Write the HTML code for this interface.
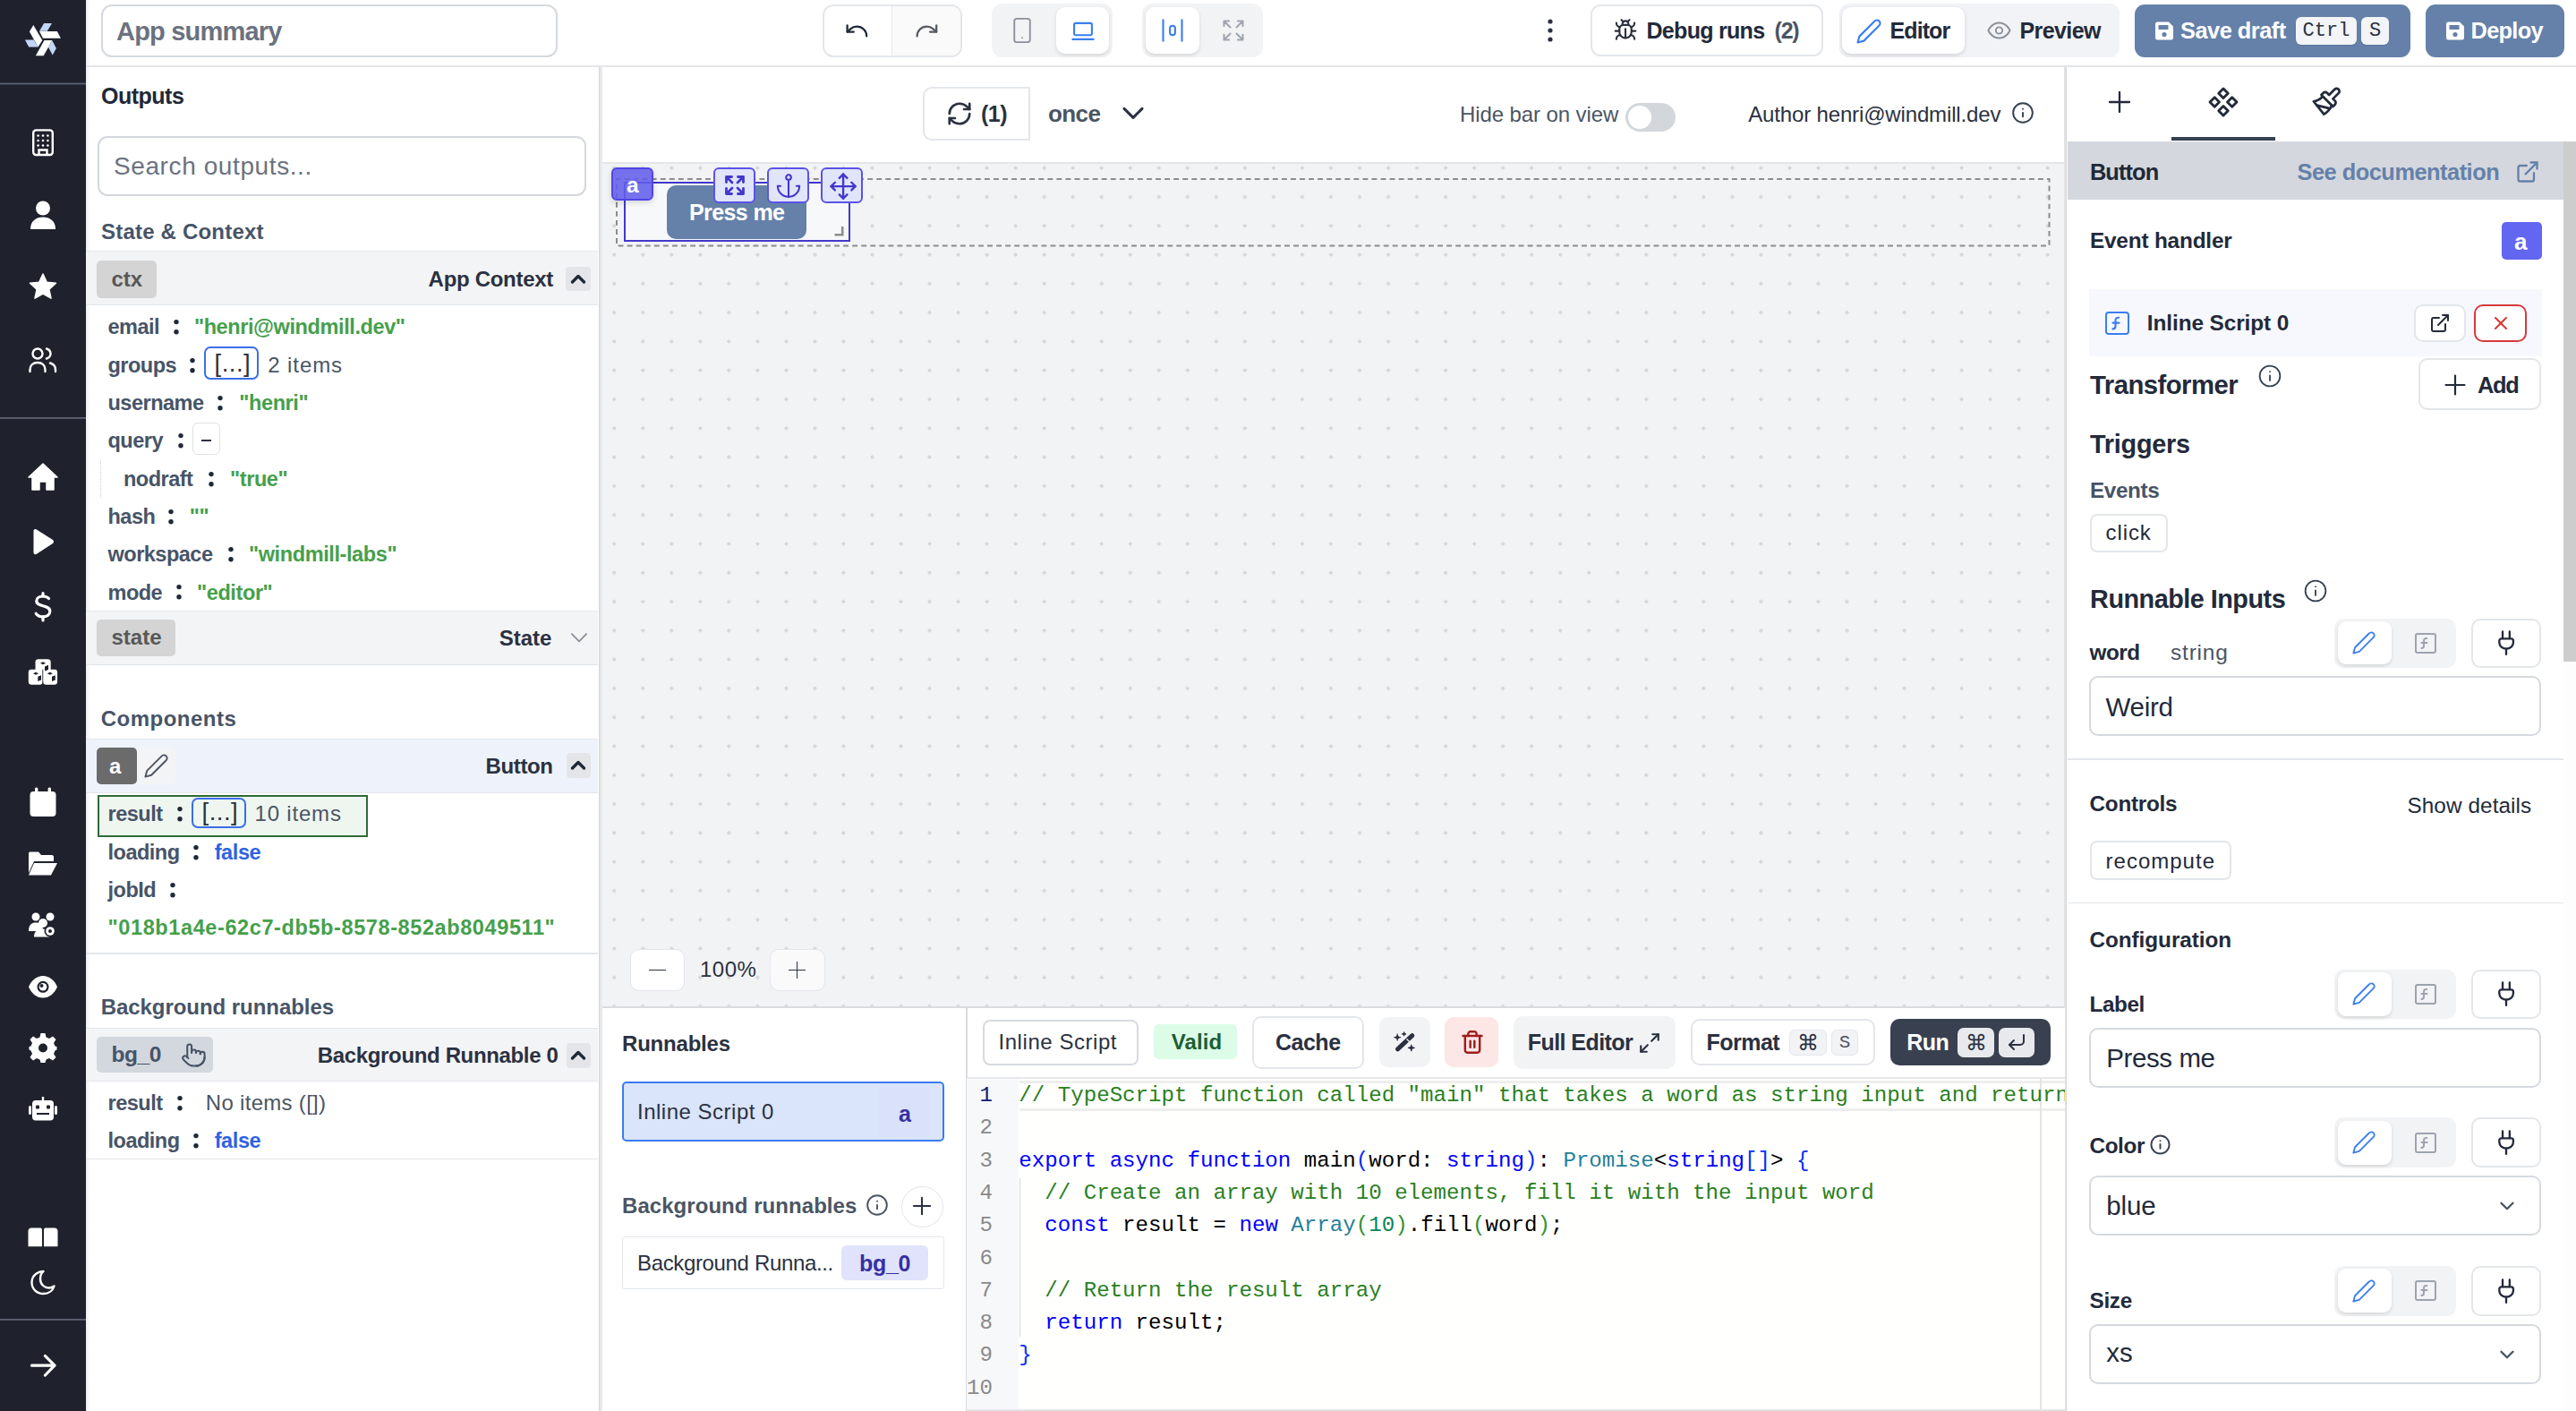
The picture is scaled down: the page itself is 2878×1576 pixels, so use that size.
<!DOCTYPE html>
<html><head><meta charset="utf-8">
<style>
*{box-sizing:border-box;margin:0;padding:0}
html,body{width:2878px;height:1576px;overflow:hidden;background:#fff}
body{position:relative;font-family:"Liberation Sans",sans-serif;color:#2b3140}
.a{position:absolute}
.t{position:absolute;white-space:nowrap;height:40px;line-height:40px}
.b{font-weight:bold}
svg{display:block;overflow:visible}
.ic{fill:none;stroke:currentColor;stroke-linecap:round;stroke-linejoin:round}
.mono{font-family:"Liberation Mono",monospace}
</style></head><body>

<div class="a" style="left:0.0px;top:0.0px;width:96.0px;height:1576.0px;background:#1f222d"></div>
<div class="a" style="left:96.0px;top:0.0px;width:2782.0px;height:74.0px;background:#fff"></div>
<div class="a" style="left:96.0px;top:72.6px;width:2782.0px;height:2.0px;background:#e3e5e9"></div>
<div class="a" style="left:96.0px;top:74.6px;width:572.3px;height:1501.4px;background:#fff"></div>
<div class="a" style="left:96.0px;top:74.6px;width:5.0px;height:1501.4px;background:linear-gradient(90deg,#eceef1,#fff)"></div>
<div class="a" style="left:96.0px;top:0.0px;width:5.0px;height:72.6px;background:linear-gradient(90deg,#eceef1,#fff)"></div>
<div class="a" style="left:668.8px;top:74.6px;width:1.6px;height:1501.4px;background:#d5d6d8"></div>
<div class="a" style="left:670.2px;top:74.6px;width:1636.8px;height:106.4px;background:#fff"></div>
<div class="a" style="left:670.2px;top:181.0px;width:1636.8px;height:943.0px;background-color:#f2f3f5"></div>
<svg class="a" style="left:670.2px;top:181px" width="1637" height="943"><defs><pattern id="dots" x="0.2" y="-9.49" width="32.03" height="32.29" patternUnits="userSpaceOnUse"><path d="M16 13.6 L18.55 16.15 L16 18.7 L13.45 16.15 Z" fill="#d5d6d8"/></pattern></defs><rect width="1637" height="943" fill="url(#dots)"/></svg>
<div class="a" style="left:670.2px;top:180.8px;width:1636.8px;height:1.8px;background:#e3e5e9"></div>
<div class="a" style="left:670.2px;top:1123.6px;width:1636.8px;height:2.0px;background:#dadbde"></div>
<div class="a" style="left:2305.7px;top:74.6px;width:2.2px;height:1501.4px;background:#e1e3e7"></div>
<div class="a" style="left:2307.9px;top:74.6px;width:1.6px;height:1501.4px;background:#d5d6d8"></div>
<div class="a" style="left:2309.5px;top:74.6px;width:568.5px;height:1501.4px;background:#fff"></div>
<div class="t " style="left:113.0px;top:86.6px;font-size:25px;letter-spacing:-0.5px;color:#1f2937;font-weight:bold;">Outputs</div>
<div class="a" style="left:108.7px;top:151.9px;width:546.8px;height:67.2px;border:2px solid #d3d7dd;border-radius:11px;background:#fff"></div>
<div class="t " style="left:127.0px;top:166.0px;font-size:28px;letter-spacing:0.6px;color:#6b7280;">Search outputs...</div>
<div class="t " style="left:113.0px;top:238.7px;font-size:24px;letter-spacing:0.2px;color:#475467;font-weight:bold;">State & Context</div>
<div class="a" style="left:96.0px;top:280.4px;width:572.0px;height:61.1px;background:#f3f4f6;border-top:1.5px solid #e3e6ea;border-bottom:1.5px solid #e3e6ea"></div>
<div class="a" style="left:108.1px;top:290.7px;width:66.7px;height:41.9px;background:#d4d4d4;border-radius:5px"></div>
<div class="t " style="left:124.5px;top:291.5px;font-size:24px;letter-spacing:0px;color:#585858;font-weight:bold;">ctx</div>
<div class="t " style="left:478.6px;top:292.2px;font-size:24px;letter-spacing:-0.3px;color:#2b3140;font-weight:bold;">App Context</div>
<div class="a" style="left:632.3px;top:298.3px;width:27.7px;height:27.2px;background:#e3e5e9;border-radius:4px"></div>
<svg class="a ic" style="left:634.1px;top:299.9px;color:#1f2937" width="24" height="24" viewBox="0 0 24 24" stroke-width="3.4"><path d="m18.5 15-6.5-6.5-6.5 6.5"/></svg>
<div class="t " style="left:120.5px;top:345.3px;font-size:23.5px;letter-spacing:-0.5px;color:#475467;font-weight:bold;">email</div>
<svg class="a" style="left:193.2px;top:355.0px" width="8" height="22"><circle cx="4" cy="4.6" r="2.7" fill="#1f2937"/><circle cx="4" cy="15.7" r="2.7" fill="#1f2937"/></svg>
<div class="t " style="left:216.9px;top:345.3px;font-size:23.5px;letter-spacing:-0.4px;color:#45a04b;font-weight:bold;">"henri@windmill.dev"</div>
<div class="t " style="left:120.5px;top:388.0px;font-size:23.5px;letter-spacing:-0.5px;color:#475467;font-weight:bold;">groups</div>
<svg class="a" style="left:210.9px;top:397.7px" width="8" height="22"><circle cx="4" cy="4.6" r="2.7" fill="#1f2937"/><circle cx="4" cy="15.7" r="2.7" fill="#1f2937"/></svg>
<div class="a" style="left:227.7px;top:387.0px;width:61.8px;height:36.9px;border:2px solid #3a6ee8;border-radius:7px"></div>
<div class="t " style="left:239.5px;top:385.5px;font-size:27.5px;letter-spacing:0.5px;color:#2b3140;">[...]</div>
<div class="t " style="left:299.3px;top:388.0px;font-size:24px;letter-spacing:0.9px;color:#4b5563;">2 items</div>
<div class="t " style="left:120.5px;top:430.3px;font-size:23.5px;letter-spacing:-0.5px;color:#475467;font-weight:bold;">username</div>
<svg class="a" style="left:242.3px;top:440.0px" width="8" height="22"><circle cx="4" cy="4.6" r="2.7" fill="#1f2937"/><circle cx="4" cy="15.7" r="2.7" fill="#1f2937"/></svg>
<div class="t " style="left:267.3px;top:430.3px;font-size:23.5px;letter-spacing:-0.4px;color:#45a04b;font-weight:bold;">"henri"</div>
<div class="t " style="left:120.5px;top:472.3px;font-size:23.5px;letter-spacing:-0.5px;color:#475467;font-weight:bold;">query</div>
<svg class="a" style="left:197.8px;top:482.0px" width="8" height="22"><circle cx="4" cy="4.6" r="2.7" fill="#1f2937"/><circle cx="4" cy="15.7" r="2.7" fill="#1f2937"/></svg>
<div class="a" style="left:214.9px;top:471.7px;width:31.4px;height:36.6px;border:1.5px solid #dfe2e6;border-radius:6px;background:#fff"></div>
<div class="a" style="left:225.0px;top:490.5px;width:11.0px;height:2.0px;background:#2b3140"></div>
<div class="a" style="left:112px;top:513px;width:0;height:42.5px;border-left:1.5px dotted #c9ccd1"></div>
<div class="t " style="left:138.0px;top:515.0px;font-size:23.5px;letter-spacing:-0.5px;color:#475467;font-weight:bold;">nodraft</div>
<svg class="a" style="left:232.2px;top:524.7px" width="8" height="22"><circle cx="4" cy="4.6" r="2.7" fill="#1f2937"/><circle cx="4" cy="15.7" r="2.7" fill="#1f2937"/></svg>
<div class="t " style="left:257.0px;top:515.0px;font-size:23.5px;letter-spacing:-0.4px;color:#45a04b;font-weight:bold;">"true"</div>
<div class="t " style="left:120.5px;top:557.3px;font-size:23.5px;letter-spacing:-0.5px;color:#475467;font-weight:bold;">hash</div>
<svg class="a" style="left:187.4px;top:567.0px" width="8" height="22"><circle cx="4" cy="4.6" r="2.7" fill="#1f2937"/><circle cx="4" cy="15.7" r="2.7" fill="#1f2937"/></svg>
<div class="t " style="left:211.8px;top:557.3px;font-size:23.5px;letter-spacing:-0.4px;color:#45a04b;font-weight:bold;">""</div>
<div class="t " style="left:120.5px;top:599.3px;font-size:23.5px;letter-spacing:-0.5px;color:#475467;font-weight:bold;">workspace</div>
<svg class="a" style="left:253.5px;top:609.0px" width="8" height="22"><circle cx="4" cy="4.6" r="2.7" fill="#1f2937"/><circle cx="4" cy="15.7" r="2.7" fill="#1f2937"/></svg>
<div class="t " style="left:278.0px;top:599.3px;font-size:23.5px;letter-spacing:-0.4px;color:#45a04b;font-weight:bold;">"windmill-labs"</div>
<div class="t " style="left:120.5px;top:641.7px;font-size:23.5px;letter-spacing:-0.5px;color:#475467;font-weight:bold;">mode</div>
<svg class="a" style="left:195.6px;top:651.4px" width="8" height="22"><circle cx="4" cy="4.6" r="2.7" fill="#1f2937"/><circle cx="4" cy="15.7" r="2.7" fill="#1f2937"/></svg>
<div class="t " style="left:220.0px;top:641.7px;font-size:23.5px;letter-spacing:-0.4px;color:#45a04b;font-weight:bold;">"editor"</div>
<div class="a" style="left:96.0px;top:682.0px;width:572.0px;height:61.0px;background:#f3f4f6;border-top:1.5px solid #e3e6ea;border-bottom:1.5px solid #e3e6ea"></div>
<div class="a" style="left:108.0px;top:692.0px;width:88.0px;height:41.0px;background:#d4d4d4;border-radius:5px"></div>
<div class="t " style="left:124.5px;top:692.3px;font-size:24px;letter-spacing:0px;color:#585858;font-weight:bold;">state</div>
<div class="t " style="left:557.7px;top:692.8px;font-size:24px;letter-spacing:0px;color:#2b3140;font-weight:bold;">State</div>
<svg class="a ic" style="left:634.0px;top:699.0px;color:#8a9099" width="26" height="26" viewBox="0 0 24 24" stroke-width="1.7"><path d="m4.5 8.5 7.5 7.5 7.5-7.5"/></svg>
<div class="t " style="left:112.7px;top:783.0px;font-size:24px;letter-spacing:0.5px;color:#475467;font-weight:bold;">Components</div>
<div class="a" style="left:96.0px;top:824.6px;width:572.0px;height:61.4px;background:#eef2fb;border-top:1.5px solid #e3e6ea;border-bottom:1.5px solid #e3e6ea"></div>
<div class="a" style="left:152.8px;top:834.5px;width:43.2px;height:41.5px;background:#f3f4f6;border-radius:0 5px 5px 0"></div>
<div class="a" style="left:108.0px;top:834.5px;width:44.8px;height:41.5px;background:#6b6b6b;border-radius:5px"></div>
<div class="t " style="left:122.0px;top:835.8px;font-size:24px;letter-spacing:0px;color:#fff;font-weight:bold;">a</div>
<svg class="a ic" style="left:160.0px;top:841.0px;color:#4b5563" width="29" height="29" viewBox="0 0 24 24" stroke-width="1.6"><path d="M17 3a2.85 2.83 0 1 1 4 4L7.5 20.5 2 22l1.5-5.5Z"/></svg>
<div class="t " style="left:542.6px;top:836.3px;font-size:24px;letter-spacing:-0.4px;color:#2b3140;font-weight:bold;">Button</div>
<div class="a" style="left:632.7px;top:841.2px;width:27.0px;height:28.2px;background:#e3e5e9;border-radius:4px"></div>
<svg class="a ic" style="left:634.2px;top:843.3px;color:#1f2937" width="24" height="24" viewBox="0 0 24 24" stroke-width="3.4"><path d="m18.5 15-6.5-6.5-6.5 6.5"/></svg>
<div class="a" style="left:109.0px;top:888.0px;width:301.8px;height:46.5px;border:2px solid #2e6b38;background:#eff6f0"></div>
<div class="t " style="left:120.5px;top:889.0px;font-size:23.5px;letter-spacing:-0.5px;color:#475467;font-weight:bold;">result</div>
<svg class="a" style="left:197.2px;top:898.7px" width="8" height="22"><circle cx="4" cy="4.6" r="2.7" fill="#1f2937"/><circle cx="4" cy="15.7" r="2.7" fill="#1f2937"/></svg>
<div class="a" style="left:213.9px;top:890.9px;width:61.5px;height:34.5px;border:2px solid #3a6ee8;border-radius:7px"></div>
<div class="t " style="left:225.5px;top:886.5px;font-size:27.5px;letter-spacing:0.5px;color:#2b3140;">[...]</div>
<div class="t " style="left:284.6px;top:889.0px;font-size:24px;letter-spacing:0.8px;color:#4b5563;">10 items</div>
<div class="t " style="left:120.5px;top:931.9px;font-size:23.5px;letter-spacing:-0.5px;color:#475467;font-weight:bold;">loading</div>
<svg class="a" style="left:215.0px;top:941.6px" width="8" height="22"><circle cx="4" cy="4.6" r="2.7" fill="#1f2937"/><circle cx="4" cy="15.7" r="2.7" fill="#1f2937"/></svg>
<div class="t " style="left:239.7px;top:931.9px;font-size:23.5px;letter-spacing:-0.4px;color:#2f62e0;font-weight:bold;">false</div>
<div class="t " style="left:120.5px;top:974.3px;font-size:23.5px;letter-spacing:-0.5px;color:#475467;font-weight:bold;">jobId</div>
<svg class="a" style="left:188.5px;top:984.0px" width="8" height="22"><circle cx="4" cy="4.6" r="2.7" fill="#1f2937"/><circle cx="4" cy="15.7" r="2.7" fill="#1f2937"/></svg>
<div class="t " style="left:120.6px;top:1016.1px;font-size:23.5px;letter-spacing:0.6px;color:#45a04b;font-weight:bold;">"018b1a4e-62c7-db5b-8578-852ab8049511"</div>
<div class="a" style="left:96.0px;top:1064.0px;width:572.0px;height:1.5px;background:#e3e6ea"></div>
<div class="t " style="left:112.7px;top:1105.3px;font-size:24px;letter-spacing:-0.05px;color:#475467;font-weight:bold;">Background runnables</div>
<div class="a" style="left:96.0px;top:1147.7px;width:572.0px;height:60.3px;background:#f3f4f6;border-top:1.5px solid #e3e6ea;border-bottom:1.5px solid #e3e6ea"></div>
<div class="a" style="left:107.9px;top:1157.6px;width:129.8px;height:40.9px;background:#d3d7de;border-radius:5px"></div>
<div class="t " style="left:124.6px;top:1158.3px;font-size:24.5px;letter-spacing:-0.5px;color:#475467;font-weight:bold;">bg_0</div>
<svg class="a ic" style="left:201.5px;top:1164.0px;color:#475467" width="29" height="29" viewBox="0 0 24 24" stroke-width="1.7"><path d="M22 14a8 8 0 0 1-8 8"/><path d="M18 11v-1a2 2 0 0 0-2-2a2 2 0 0 0-2 2"/><path d="M14 10V9a2 2 0 0 0-2-2a2 2 0 0 0-2 2v1"/><path d="M10 9.5V4a2 2 0 0 0-2-2a2 2 0 0 0-2 2v10"/><path d="M18 11a2 2 0 1 1 4 0v3a8 8 0 0 1-8 8h-2c-2.8 0-4.5-.86-5.99-2.34l-3.6-3.6a2 2 0 0 1 2.83-2.82L7 15"/></svg>
<div class="t " style="left:354.8px;top:1159.0px;font-size:24px;letter-spacing:-0.35px;color:#2b3140;font-weight:bold;">Background Runnable 0</div>
<div class="a" style="left:632.7px;top:1164.8px;width:27.0px;height:27.8px;background:#e3e5e9;border-radius:4px"></div>
<svg class="a ic" style="left:634.2px;top:1166.7px;color:#1f2937" width="24" height="24" viewBox="0 0 24 24" stroke-width="3.4"><path d="m18.5 15-6.5-6.5-6.5 6.5"/></svg>
<div class="t " style="left:120.5px;top:1211.8px;font-size:23.5px;letter-spacing:-0.5px;color:#475467;font-weight:bold;">result</div>
<svg class="a" style="left:197.2px;top:1221.5px" width="8" height="22"><circle cx="4" cy="4.6" r="2.7" fill="#1f2937"/><circle cx="4" cy="15.7" r="2.7" fill="#1f2937"/></svg>
<div class="t " style="left:229.8px;top:1211.8px;font-size:24px;letter-spacing:0.3px;color:#4b5563;">No items ([])</div>
<div class="t " style="left:120.5px;top:1254.3px;font-size:23.5px;letter-spacing:-0.5px;color:#475467;font-weight:bold;">loading</div>
<svg class="a" style="left:215.0px;top:1264.0px" width="8" height="22"><circle cx="4" cy="4.6" r="2.7" fill="#1f2937"/><circle cx="4" cy="15.7" r="2.7" fill="#1f2937"/></svg>
<div class="t " style="left:239.7px;top:1254.3px;font-size:23.5px;letter-spacing:-0.4px;color:#2f62e0;font-weight:bold;">false</div>
<div class="a" style="left:96.0px;top:1293.5px;width:572.0px;height:1.5px;background:#e3e6ea"></div>
<div class="a" style="left:1031.0px;top:97.0px;width:120.0px;height:60.0px;border:2px solid #e3e6ea;border-radius:10px 0 0 10px;background:#fff"></div>
<svg class="a ic" style="left:1057.0px;top:112.0px;color:#2b3140" width="30" height="30" viewBox="0 0 24 24" stroke-width="2.1"><path d="M3 12a9 9 0 0 1 9-9 9.75 9.75 0 0 1 6.74 2.74L21 8"/><path d="M21 3v5h-5"/><path d="M21 12a9 9 0 0 1-9 9 9.75 9.75 0 0 1-6.74-2.74L3 16"/><path d="M8 16H3v5"/></svg>
<div class="t " style="left:1096.0px;top:107.0px;font-size:25px;letter-spacing:-0.5px;color:#2b3140;font-weight:bold;">(1)</div>
<div class="t " style="left:1171.0px;top:107.0px;font-size:26px;letter-spacing:-0.6px;color:#4b5563;font-weight:bold;">once</div>
<svg class="a ic" style="left:1250.0px;top:110.0px;color:#2b3140" width="32" height="32" viewBox="0 0 24 24" stroke-width="2.3"><path d="m4.5 8.5 7.5 7.5 7.5-7.5"/></svg>
<div class="t " style="left:1631.0px;top:108.1px;font-size:24px;letter-spacing:-0.1px;color:#4b5563;">Hide bar on view</div>
<div class="a" style="left:1816.4px;top:115.3px;width:55.6px;height:31.7px;background:#d3d6db;border-radius:16px"></div>
<div class="a" style="left:1818.8px;top:118.2px;width:25.8px;height:25.8px;background:#fff;border-radius:50%"></div>
<div class="t " style="left:1953.2px;top:108.1px;font-size:24px;letter-spacing:-0.15px;color:#2b3140;">Author henri@windmill.dev</div>
<svg class="a ic" style="left:2247.0px;top:113.0px;color:#374151" width="26" height="26" viewBox="0 0 24 24" stroke-width="1.8"><circle cx="12" cy="12" r="10"/><path d="M12 16v-4"/><path d="M12 8h.01"/></svg>
<svg class="a" style="left:688px;top:198.8px" width="1603" height="77"><rect x="1" y="1" width="1600.5" height="74.5" fill="none" stroke="#8c8c8c" stroke-width="2" stroke-dasharray="5.9 4.16" stroke-dashoffset="1.52"/></svg>
<div class="a" style="left:697.0px;top:203.3px;width:252.6px;height:67.1px;border:2px solid #4338ca;background:#f7f8fa"></div>
<div class="a" style="left:745.4px;top:206.7px;width:155.3px;height:60.3px;background:#6581a9;border-radius:10px"></div>
<div class="t " style="left:770.0px;top:216.5px;font-size:25px;letter-spacing:-0.6px;color:#fff;font-weight:bold;">Press me</div>
<svg class="a" style="left:930px;top:251px" width="14" height="14" viewBox="0 0 14 14"><path d="M11.2 2 V11.3 H2.5" fill="none" stroke="#8c8c8c" stroke-width="2.6"/></svg>
<div class="a" style="left:682.7px;top:187.0px;width:47.3px;height:36.5px;background:rgba(99,95,235,0.88);border:2px solid #4f46e5;border-radius:6px;box-shadow:0 2px 6px rgba(0,0,0,0.15)"></div>
<div class="t " style="left:700.0px;top:187.3px;font-size:24.5px;letter-spacing:0px;color:#fff;font-weight:bold;">a</div>
<div class="a" style="left:797.0px;top:187.0px;width:47.0px;height:39.6px;background:#e0e5fa;border:2px solid #5b52e8;border-radius:6px"></div>
<div class="a" style="left:857.3px;top:187.0px;width:47.0px;height:39.6px;background:#e0e5fa;border:2px solid #5b52e8;border-radius:6px"></div>
<div class="a" style="left:917.0px;top:187.0px;width:47.0px;height:39.6px;background:#e0e5fa;border:2px solid #5b52e8;border-radius:6px"></div>
<svg class="a ic" style="left:808.5px;top:194.8px;color:#4338ca" width="24" height="24" viewBox="0 0 24 24" stroke-width="2.8"><path d="M2.5 2.5l6.5 6.5M2.5 2.5v6M2.5 2.5h6"/><path d="M21.5 2.5l-6.5 6.5M21.5 2.5v6M21.5 2.5h-6"/><path d="M2.5 21.5l6.5-6.5M2.5 21.5v-6M2.5 21.5h6"/><path d="M21.5 21.5l-6.5-6.5M21.5 21.5v-6M21.5 21.5h-6"/></svg>
<svg class="a ic" style="left:867.8px;top:193.8px;color:#4338ca" width="26" height="26" viewBox="0 0 24 24" stroke-width="1.9"><circle cx="12" cy="3.8" r="2.6"/><path d="M12 6.4V24"/><path d="M0.8 12.7a11.2 11.2 0 0 0 22.4 0"/><path d="M0.8 12.7h3M23.2 12.7h-3"/></svg>
<svg class="a ic" style="left:927.5px;top:193.8px;color:#4338ca" width="26" height="26" viewBox="0 0 24 24" stroke-width="2.2"><path d="M13 0.5v25M0.5 13h25"/><path d="M9 4.5l4-4 4 4M9 21.5l4 4 4-4M4.5 9l-4 4 4 4M21.5 9l4 4-4 4"/></svg>
<div class="a" style="left:704.0px;top:1060.0px;width:61.0px;height:47.0px;border:1.5px solid #e3e6ea;border-radius:10px;background:#fff"></div>
<div class="a" style="left:725.0px;top:1082.5px;width:19.0px;height:1.9px;background:#2b3140"></div>
<div class="t " style="left:782.0px;top:1063.3px;font-size:24px;letter-spacing:0.5px;color:#2b3140;">100%</div>
<div class="a" style="left:859.5px;top:1060.0px;width:62.0px;height:47.0px;border:1.5px solid #e3e6ea;border-radius:10px;background:#fafafa"></div>
<div class="a" style="left:881.0px;top:1082.5px;width:19.0px;height:1.9px;background:#2b3140"></div>
<div class="a" style="left:889.5px;top:1074.0px;width:1.9px;height:19.0px;background:#2b3140"></div>
<div class="a" style="left:670.2px;top:1125.6px;width:1636.8px;height:450.4px;background:#fff"></div>
<div class="a" style="left:1078.9px;top:1125.6px;width:1.8px;height:450.4px;background:#dadbde"></div>
<div class="t " style="left:695.0px;top:1145.6px;font-size:24px;letter-spacing:-0.2px;color:#2b3140;font-weight:bold;">Runnables</div>
<div class="a" style="left:695.0px;top:1207.5px;width:359.5px;height:67.5px;background:#dae4fb;border:2px solid #3d7bf0;border-radius:5px"></div>
<div class="a" style="left:982.0px;top:1211.0px;width:56.0px;height:59.0px;background:#dcdcf8;border-radius:6px;opacity:0.3"></div>
<div class="t " style="left:712.0px;top:1221.8px;font-size:24px;letter-spacing:0.5px;color:#2b3140;">Inline Script 0</div>
<div class="t " style="left:1004.0px;top:1224.3px;font-size:25px;letter-spacing:0px;color:#3730a3;font-weight:bold;">a</div>
<div class="t " style="left:695.0px;top:1326.8px;font-size:24px;letter-spacing:0.05px;color:#4b5563;font-weight:bold;">Background runnables</div>
<svg class="a ic" style="left:966.5px;top:1333.0px;color:#4b5563" width="26" height="26" viewBox="0 0 24 24" stroke-width="1.8"><circle cx="12" cy="12" r="10"/><path d="M12 16v-4"/><path d="M12 8h.01"/></svg>
<div class="a" style="left:1007.0px;top:1324.6px;width:47.0px;height:46.4px;border:1.5px solid #e3e6ea;border-radius:50%;background:#fff"></div>
<svg class="a ic" style="left:1019.0px;top:1336.0px;color:#2b3140" width="23" height="23" viewBox="0 0 24 24" stroke-width="2.2"><path d="M2 11.5h19"/><path d="M11.5 2v19"/></svg>
<div class="a" style="left:695.0px;top:1380.7px;width:359.5px;height:59.3px;border:1.5px solid #e3e6ea;border-radius:3px;background:#fff"></div>
<div class="t " style="left:712.0px;top:1391.0px;font-size:24px;letter-spacing:-0.35px;color:#2b3140;">Background Runna...</div>
<div class="a" style="left:939.7px;top:1390.5px;width:96.9px;height:39.1px;background:#e0e3fb;border-radius:6px"></div>
<div class="t " style="left:960.0px;top:1391.0px;font-size:25px;letter-spacing:-0.3px;color:#3730a3;font-weight:bold;">bg_0</div>
<div class="a" style="left:1097.5px;top:1138.8px;width:174.5px;height:51.2px;border:2px solid #d7dae0;border-radius:8px;background:#fff"></div>
<div class="t " style="left:1115.5px;top:1144.2px;font-size:24px;letter-spacing:0.55px;color:#2b3140;">Inline Script</div>
<div class="a" style="left:1289.0px;top:1144.3px;width:92.5px;height:39.2px;background:#dcfce7;border-radius:6px"></div>
<div class="t " style="left:1308.8px;top:1144.2px;font-size:24px;letter-spacing:0.1px;color:#1d5e34;font-weight:bold;">Valid</div>
<div class="a" style="left:1398.8px;top:1135.0px;width:125.6px;height:59.0px;border:2px solid #e3e6ea;border-radius:10px;background:#fff"></div>
<div class="t " style="left:1425.0px;top:1144.3px;font-size:25px;letter-spacing:-0.5px;color:#2b3140;font-weight:bold;">Cache</div>
<div class="a" style="left:1541.4px;top:1136.0px;width:56.3px;height:56.0px;background:#f2f3f5;border-radius:10px"></div>
<svg class="a" style="left:0;top:0;overflow:visible" width="1" height="1"><path d="M1561.5 1171.8 L1577.8 1156.6" stroke="#2b3140" stroke-width="5" stroke-linecap="round"/><path d="M1571.5 1160.5 L1575.5 1164.3" stroke="#f2f3f5" stroke-width="1.3"/><path d="M1561.2 1155.1999999999998 Q1561.2 1158.6 1564.6000000000001 1158.6 Q1561.2 1158.6 1561.2 1162.0 Q1561.2 1158.6 1557.8 1158.6 Q1561.2 1158.6 1561.2 1155.1999999999998 Z" fill="#2b3140" stroke="#2b3140" stroke-width="1.2" stroke-linejoin="round"/><path d="M1568.6 1152.6000000000001 Q1568.6 1154.9 1570.8999999999999 1154.9 Q1568.6 1154.9 1568.6 1157.2 Q1568.6 1154.9 1566.3 1154.9 Q1568.6 1154.9 1568.6 1152.6000000000001 Z" fill="#2b3140" stroke="#2b3140" stroke-width="1" stroke-linejoin="round"/><path d="M1576.8 1167.0 Q1576.8 1170.4 1580.2 1170.4 Q1576.8 1170.4 1576.8 1173.8000000000002 Q1576.8 1170.4 1573.3999999999999 1170.4 Q1576.8 1170.4 1576.8 1167.0 Z" fill="#2b3140" stroke="#2b3140" stroke-width="1.2" stroke-linejoin="round"/></svg>
<div class="a" style="left:1614.0px;top:1136.0px;width:60.0px;height:56.0px;background:#fde6e6;border-radius:10px"></div>
<svg class="a ic" style="left:1630.5px;top:1150.0px;color:#9f1d1d" width="28" height="28" viewBox="0 0 24 24" stroke-width="2.1"><path d="M3 6h18"/><path d="M19 6v14c0 1-1 2-2 2H7c-1 0-2-1-2-2V6"/><path d="M8 6V4c0-1 1-2 2-2h4c1 0 2 1 2 2v2"/><line x1="10" x2="10" y1="11" y2="17"/><line x1="14" x2="14" y1="11" y2="17"/></svg>
<div class="a" style="left:1690.5px;top:1134.5px;width:181.2px;height:59.5px;background:#f2f3f5;border-radius:10px"></div>
<div class="t " style="left:1706.7px;top:1144.3px;font-size:25px;letter-spacing:-0.55px;color:#2b3140;font-weight:bold;">Full Editor</div>
<svg class="a ic" style="left:1829.5px;top:1151.5px;color:#2b3140" width="26" height="26" viewBox="0 0 24 24" stroke-width="2"><polyline points="15 3 21 3 21 9"/><polyline points="9 21 3 21 3 15"/><line x1="21" x2="14" y1="3" y2="10"/><line x1="3" x2="10" y1="21" y2="14"/></svg>
<div class="a" style="left:1889.0px;top:1138.0px;width:205.8px;height:51.7px;border:2px solid #e3e6ea;border-radius:10px;background:#fff"></div>
<div class="t " style="left:1906.4px;top:1144.3px;font-size:25px;letter-spacing:-0.5px;color:#2b3140;font-weight:bold;">Format</div>
<div class="a" style="left:1999.1px;top:1150.0px;width:41.6px;height:29.0px;background:#f2f3f5;border-radius:6px;border:1px solid #e5e7eb"></div>
<div class="t " style="left:2008.0px;top:1144.9px;font-size:24px;letter-spacing:0px;color:#2b3140;">&#8984;</div>
<div class="a" style="left:2045.5px;top:1150.0px;width:30.9px;height:29.0px;background:#f2f3f5;border-radius:6px;border:1px solid #e5e7eb"></div>
<div class="a mono" style="left:2045.5px;top:1150px;width:31px;height:29px;line-height:29px;font-size:21px;text-align:center;color:#4b5563">S</div>
<div class="a" style="left:2111.8px;top:1138.0px;width:179.2px;height:52.4px;background:#394150;border-radius:10px"></div>
<div class="t " style="left:2130.2px;top:1144.3px;font-size:25px;letter-spacing:-0.5px;color:#fff;font-weight:bold;">Run</div>
<div class="a" style="left:2186.9px;top:1148.0px;width:40.8px;height:32.6px;background:#e7e9ed;border-radius:7px"></div>
<div class="t " style="left:2195.5px;top:1144.6px;font-size:24px;letter-spacing:0px;color:#2b3140;">&#8984;</div>
<div class="a" style="left:2232.7px;top:1148.0px;width:40.8px;height:32.6px;background:#e7e9ed;border-radius:7px"></div>
<svg class="a ic" style="left:2241.0px;top:1152.0px;color:#2b3140" width="24" height="24" viewBox="0 0 24 24" stroke-width="2"><polyline points="9 10 4 15 9 20"/><path d="M20 4v7a4 4 0 0 1-4 4H4"/></svg>
<div class="a" style="left:1080.2px;top:1203.3px;width:1226.8px;height:2.0px;background:#e5e7eb"></div>
<div class="a" style="left:1080.2px;top:1205.3px;width:58.3px;height:370.7px;background:#f7f8fa"></div>
<div class="a" style="left:1138.5px;top:1205.3px;width:1168.5px;height:370.7px;background:#fffffd"></div>
<div class="a" style="left:1138.5px;top:1206.8px;width:1168.5px;height:34.2px;border-top:3px solid #eeeeee;border-bottom:3px solid #eeeeee"></div>
<div class="a" style="left:2279.2px;top:1205.3px;width:1.5px;height:370.7px;background:#e4e4e4"></div>
<div class="a" style="left:1138.5px;top:1315.5px;width:1.5px;height:177.5px;background:#d6d6d6"></div>
<div class="a mono" style="left:1138.3px;top:1206.0px;width:1169px;height:36.3px;line-height:36.3px;font-size:24.13px;white-space:pre;overflow:hidden;"><span style="color:#2a7f22">// TypeScript function called "main" that takes a word as string input and returns an array of 10 elements</span></div>
<div class="a mono" style="left:1050px;top:1206.0px;width:59px;height:36.3px;line-height:36.3px;font-size:24.13px;text-align:right;color:#0b216f">1</div>
<div class="a mono" style="left:1138.3px;top:1242.2px;width:1169px;height:36.3px;line-height:36.3px;font-size:24.13px;white-space:pre;overflow:hidden;"></div>
<div class="a mono" style="left:1050px;top:1242.2px;width:59px;height:36.3px;line-height:36.3px;font-size:24.13px;text-align:right;color:#8a8a8a">2</div>
<div class="a mono" style="left:1138.3px;top:1278.5px;width:1169px;height:36.3px;line-height:36.3px;font-size:24.13px;white-space:pre;overflow:hidden;"><span style="color:#0000ff">export async function</span><span style="color:#000000"> main</span><span style="color:#0431fa">(</span><span style="color:#000000">word: </span><span style="color:#0000ff">string</span><span style="color:#0431fa">)</span><span style="color:#000000">: </span><span style="color:#267f99">Promise</span><span style="color:#000000">&lt;</span><span style="color:#0000ff">string</span><span style="color:#0431fa">[]</span><span style="color:#000000">&gt; </span><span style="color:#0431fa">{</span></div>
<div class="a mono" style="left:1050px;top:1278.5px;width:59px;height:36.3px;line-height:36.3px;font-size:24.13px;text-align:right;color:#8a8a8a">3</div>
<div class="a mono" style="left:1138.3px;top:1314.9px;width:1169px;height:36.3px;line-height:36.3px;font-size:24.13px;white-space:pre;overflow:hidden;"><span style="color:#2a7f22">  // Create an array with 10 elements, fill it with the input word</span></div>
<div class="a mono" style="left:1050px;top:1314.9px;width:59px;height:36.3px;line-height:36.3px;font-size:24.13px;text-align:right;color:#8a8a8a">4</div>
<div class="a mono" style="left:1138.3px;top:1351.2px;width:1169px;height:36.3px;line-height:36.3px;font-size:24.13px;white-space:pre;overflow:hidden;"><span style="color:#0000ff">  const</span><span style="color:#000000"> result = </span><span style="color:#0000ff">new</span><span style="color:#267f99"> Array</span><span style="color:#319331">(</span><span style="color:#098658">10</span><span style="color:#319331">)</span><span style="color:#000000">.fill</span><span style="color:#319331">(</span><span style="color:#000000">word</span><span style="color:#319331">)</span><span style="color:#000000">;</span></div>
<div class="a mono" style="left:1050px;top:1351.2px;width:59px;height:36.3px;line-height:36.3px;font-size:24.13px;text-align:right;color:#8a8a8a">5</div>
<div class="a mono" style="left:1138.3px;top:1387.5px;width:1169px;height:36.3px;line-height:36.3px;font-size:24.13px;white-space:pre;overflow:hidden;"></div>
<div class="a mono" style="left:1050px;top:1387.5px;width:59px;height:36.3px;line-height:36.3px;font-size:24.13px;text-align:right;color:#8a8a8a">6</div>
<div class="a mono" style="left:1138.3px;top:1423.8px;width:1169px;height:36.3px;line-height:36.3px;font-size:24.13px;white-space:pre;overflow:hidden;"><span style="color:#2a7f22">  // Return the result array</span></div>
<div class="a mono" style="left:1050px;top:1423.8px;width:59px;height:36.3px;line-height:36.3px;font-size:24.13px;text-align:right;color:#8a8a8a">7</div>
<div class="a mono" style="left:1138.3px;top:1460.0px;width:1169px;height:36.3px;line-height:36.3px;font-size:24.13px;white-space:pre;overflow:hidden;"><span style="color:#0000ff">  return</span><span style="color:#000000"> result;</span></div>
<div class="a mono" style="left:1050px;top:1460.0px;width:59px;height:36.3px;line-height:36.3px;font-size:24.13px;text-align:right;color:#8a8a8a">8</div>
<div class="a mono" style="left:1138.3px;top:1496.3px;width:1169px;height:36.3px;line-height:36.3px;font-size:24.13px;white-space:pre;overflow:hidden;"><span style="color:#0431fa">}</span></div>
<div class="a mono" style="left:1050px;top:1496.3px;width:59px;height:36.3px;line-height:36.3px;font-size:24.13px;text-align:right;color:#8a8a8a">9</div>
<div class="a mono" style="left:1138.3px;top:1532.7px;width:1169px;height:36.3px;line-height:36.3px;font-size:24.13px;white-space:pre;overflow:hidden;"></div>
<div class="a mono" style="left:1050px;top:1532.7px;width:59px;height:36.3px;line-height:36.3px;font-size:24.13px;text-align:right;color:#8a8a8a">10</div>
<div class="a" style="left:1080.2px;top:1573.6px;width:1226.8px;height:2.4px;background:#e3e5e9"></div>
<div class="a" style="left:670.4px;top:74.6px;width:2.2px;height:1501.4px;background:linear-gradient(90deg,#e2e3e7,#eceef1)"></div>
<svg class="a ic" style="left:2355.5px;top:102.0px;color:#232a3a" width="24" height="24" viewBox="0 0 24 24" stroke-width="2.3"><path d="M1 12h22"/><path d="M12 1v22"/></svg>
<svg class="a ic" style="left:2465.5px;top:95.5px;color:#232a3a" width="36" height="36" viewBox="0 0 24 24" stroke-width="1.9"><path d="M5.5 8.5 9 12l-3.5 3.5L2 12l3.5-3.5Z"/><path d="m12 2 3.5 3.5L12 9 8.5 5.5 12 2Z"/><path d="M18.5 8.5 22 12l-3.5 3.5L15 12l3.5-3.5Z"/><path d="m12 15 3.5 3.5L12 22l-3.5-3.5L12 15Z"/></svg>
<svg class="a ic" style="left:2581.5px;top:96.0px;color:#232a3a" width="34.5" height="34.5" viewBox="0 0 24 24" stroke-width="1.9"><path d="M18.37 2.63 14 7l-1.59-1.59a2 2 0 0 0-2.82 0L8 7l9 9 1.59-1.59a2 2 0 0 0 0-2.82L17 10l4.37-4.37a2.12 2.12 0 1 0-3-3Z"/><path d="M9 8c-2 3-4 3.5-7 4l8 10c2-1 6-5 6-7"/><path d="M14.5 17.5 4.5 15"/></svg>
<div class="a" style="left:2425.5px;top:152.8px;width:116.3px;height:4.4px;background:#374151"></div>
<div class="a" style="left:2309.5px;top:158.3px;width:554.5px;height:65.1px;background:#d4d7dd"></div>
<div class="a" style="left:2864.0px;top:158.3px;width:14.0px;height:580.8px;background:#cdcdcd"></div>
<div class="a" style="left:2864.0px;top:739.1px;width:14.0px;height:836.9px;background:#fdfdfd"></div>
<div class="t " style="left:2334.9px;top:171.8px;font-size:25.4px;letter-spacing:-0.9px;color:#1f2937;font-weight:bold;">Button</div>
<div class="t " style="left:2566.5px;top:171.8px;font-size:25.4px;letter-spacing:-0.5px;color:#6581a9;font-weight:bold;">See documentation</div>
<svg class="a ic" style="left:2810.0px;top:178.0px;color:#6581a9" width="28" height="28" viewBox="0 0 24 24" stroke-width="2"><path d="M15 3h6v6"/><path d="M10 14 21 3"/><path d="M18 13v6a2 2 0 0 1-2 2H5a2 2 0 0 1-2-2V8a2 2 0 0 1 2-2h6"/></svg>
<div class="t " style="left:2334.9px;top:249.3px;font-size:24.4px;letter-spacing:-0.2px;color:#232a3a;font-weight:bold;">Event handler</div>
<div class="a" style="left:2795.0px;top:247.9px;width:44.7px;height:42.4px;background:#6366f1;border-radius:5px"></div>
<div class="t " style="left:2809.0px;top:250.3px;font-size:26px;letter-spacing:0px;color:#fff;font-weight:bold;">a</div>
<div class="a" style="left:2334.0px;top:322.8px;width:505.7px;height:75.6px;background:#f6f8fd"></div>
<div class="a" style="left:2352.3px;top:348.1px;width:26.7px;height:26.2px;border:2.2px solid #3b7ef0;border-radius:4px"></div>
<svg class="a ic" style="left:2352.3px;top:348.1px;color:#3b7ef0" width="26.7" height="26.2" viewBox="0 0 24 24" stroke-width="2"><path d="M7.5 17.8c2 0 2.8-1.1 2.8-2.9V9.2c0-2 1-3.2 3.4-3"/><path d="M7.6 11.5h6.4"/></svg>
<div class="t " style="left:2398.8px;top:340.9px;font-size:24.4px;letter-spacing:-0.1px;color:#232a3a;font-weight:bold;">Inline Script 0</div>
<div class="a" style="left:2696.7px;top:339.7px;width:58.1px;height:42.7px;border:2px solid #e3e6ea;border-radius:10px;background:#fff"></div>
<svg class="a ic" style="left:2714.0px;top:349.0px;color:#232a3a" width="24" height="24" viewBox="0 0 24 24" stroke-width="2"><path d="M15 3h6v6"/><path d="M10 14 21 3"/><path d="M18 13v6a2 2 0 0 1-2 2H5a2 2 0 0 1-2-2V8a2 2 0 0 1 2-2h6"/></svg>
<div class="a" style="left:2764.0px;top:339.7px;width:59.0px;height:42.7px;border:2px solid #d63a3a;border-radius:10px;background:#fff"></div>
<svg class="a ic" style="left:2781.5px;top:349.0px;color:#d63a3a" width="24" height="24" viewBox="0 0 24 24" stroke-width="2"><path d="M18 6 6 18"/><path d="m6 6 12 12"/></svg>
<div class="t " style="left:2335.1px;top:410.0px;font-size:29.3px;letter-spacing:-0.55px;color:#232a3a;font-weight:bold;">Transformer</div>
<svg class="a ic" style="left:2522.5px;top:406.5px;color:#374151" width="26" height="26" viewBox="0 0 24 24" stroke-width="1.7"><circle cx="12" cy="12" r="10.5"/><path d="M12 16.5v-5"/><path d="M12 7.5h.01"/></svg>
<div class="a" style="left:2701.6px;top:400.4px;width:137.4px;height:58.1px;border:2px solid #e3e6ea;border-radius:10px;background:#fff"></div>
<svg class="a ic" style="left:2731.0px;top:418.0px;color:#232a3a" width="24" height="24" viewBox="0 0 24 24" stroke-width="2.2"><path d="M1.5 12h21"/><path d="M12 1.5v21"/></svg>
<div class="t " style="left:2767.9px;top:410.3px;font-size:25.4px;letter-spacing:-1.2px;color:#232a3a;font-weight:bold;">Add</div>
<div class="t " style="left:2335.1px;top:476.2px;font-size:28.8px;letter-spacing:-0.25px;color:#232a3a;font-weight:bold;">Triggers</div>
<div class="t " style="left:2335.0px;top:528.2px;font-size:24.3px;letter-spacing:-0.4px;color:#475467;font-weight:bold;">Events</div>
<div class="a" style="left:2334.5px;top:574.0px;width:87.5px;height:42.5px;border:2px solid #e3e6ea;border-radius:8px;background:#fff"></div>
<div class="t " style="left:2352.6px;top:575.3px;font-size:24px;letter-spacing:0.9px;color:#232a3a;">click</div>
<div class="t " style="left:2335.1px;top:649.3px;font-size:28.8px;letter-spacing:-0.5px;color:#232a3a;font-weight:bold;">Runnable Inputs</div>
<svg class="a ic" style="left:2573.5px;top:646.5px;color:#374151" width="26" height="26" viewBox="0 0 24 24" stroke-width="1.7"><circle cx="12" cy="12" r="10.5"/><path d="M12 16.5v-5"/><path d="M12 7.5h.01"/></svg>
<div class="a" style="left:2608.0px;top:690.8px;width:135.5px;height:55.2px;background:#f2f3f5;border-radius:10px"></div>
<div class="a" style="left:2612.3px;top:694.3px;width:59.4px;height:48.2px;background:#fff;border-radius:9px;box-shadow:0 2px 4px rgba(0,0,0,0.12)"></div>
<svg class="a ic" style="left:2627.0px;top:704.4px;color:#3b7ef0" width="28" height="28" viewBox="0 0 24 24" stroke-width="1.6"><path d="M17 3a2.85 2.83 0 1 1 4 4L7.5 20.5 2 22l1.5-5.5Z"/></svg>
<div class="a" style="left:2698.3px;top:706.8px;width:23.3px;height:23.0px;border:2.2px solid #9ca3af;border-radius:3px"></div>
<svg class="a ic" style="left:2698.3px;top:706.8px;color:#9ca3af" width="23.3" height="23" viewBox="0 0 24 24" stroke-width="2.1"><path d="M7.5 17.8c2 0 2.8-1.1 2.8-2.9V9.2c0-2 1-3.2 3.4-3"/><path d="M7.6 11.5h6.4"/></svg>
<div class="a" style="left:2760.5px;top:690.8px;width:78.5px;height:55.2px;border:2px solid #e3e6ea;border-radius:10px;background:#fff"></div>
<svg class="a ic" style="left:2786.0px;top:704.4px;color:#232a3a" width="28" height="28" viewBox="0 0 24 24" stroke-width="2"><path d="M8.6 1.2v6.6M15.3 1.2v6.6"/><path d="M5.4 10a2 2 0 0 1 2-2h9.4a2 2 0 0 1 2 2v1.6a6.7 6.1 0 0 1-13.4 0Z"/><path d="M12 17.7v5.2"/></svg>
<div class="t " style="left:2334.5px;top:709.3px;font-size:24.3px;letter-spacing:-0.45px;color:#232a3a;font-weight:bold;">word</div>
<div class="t " style="left:2425.0px;top:709.3px;font-size:24.5px;letter-spacing:0.8px;color:#4b5563;">string</div>
<div class="a" style="left:2334.0px;top:755.4px;width:505.0px;height:66.6px;border:2px solid #d5d9df;border-radius:10px;background:#fff"></div>
<div class="t " style="left:2352.6px;top:769.5px;font-size:29.5px;letter-spacing:-0.3px;color:#232a3a;">Weird</div>
<div class="a" style="left:2309.5px;top:847.2px;width:554.5px;height:1.6px;background:#e3e6ea"></div>
<div class="t " style="left:2334.5px;top:877.6px;font-size:24.3px;letter-spacing:-0.25px;color:#232a3a;font-weight:bold;">Controls</div>
<div class="t " style="left:2689.4px;top:879.5px;font-size:24.3px;letter-spacing:0.1px;color:#232a3a;">Show details</div>
<div class="a" style="left:2334.5px;top:939.4px;width:158.9px;height:43.2px;border:2px solid #e3e6ea;border-radius:8px;background:#fff"></div>
<div class="t " style="left:2352.6px;top:941.5px;font-size:24px;letter-spacing:1.0px;color:#232a3a;">recompute</div>
<div class="a" style="left:2309.5px;top:1007.9px;width:554.5px;height:1.6px;background:#e3e6ea"></div>
<div class="t " style="left:2334.5px;top:1029.7px;font-size:24.3px;letter-spacing:-0.05px;color:#232a3a;font-weight:bold;">Configuration</div>
<div class="a" style="left:2608.0px;top:1082.6px;width:135.5px;height:55.7px;background:#f2f3f5;border-radius:10px"></div>
<div class="a" style="left:2612.3px;top:1086.1px;width:59.4px;height:48.7px;background:#fff;border-radius:9px;box-shadow:0 2px 4px rgba(0,0,0,0.12)"></div>
<svg class="a ic" style="left:2627.0px;top:1096.4px;color:#3b7ef0" width="28" height="28" viewBox="0 0 24 24" stroke-width="1.6"><path d="M17 3a2.85 2.83 0 1 1 4 4L7.5 20.5 2 22l1.5-5.5Z"/></svg>
<div class="a" style="left:2698.3px;top:1098.8px;width:23.3px;height:23.0px;border:2.2px solid #9ca3af;border-radius:3px"></div>
<svg class="a ic" style="left:2698.3px;top:1098.8px;color:#9ca3af" width="23.3" height="23" viewBox="0 0 24 24" stroke-width="2.1"><path d="M7.5 17.8c2 0 2.8-1.1 2.8-2.9V9.2c0-2 1-3.2 3.4-3"/><path d="M7.6 11.5h6.4"/></svg>
<div class="a" style="left:2760.5px;top:1082.6px;width:78.5px;height:55.7px;border:2px solid #e3e6ea;border-radius:10px;background:#fff"></div>
<svg class="a ic" style="left:2786.0px;top:1096.4px;color:#232a3a" width="28" height="28" viewBox="0 0 24 24" stroke-width="2"><path d="M8.6 1.2v6.6M15.3 1.2v6.6"/><path d="M5.4 10a2 2 0 0 1 2-2h9.4a2 2 0 0 1 2 2v1.6a6.7 6.1 0 0 1-13.4 0Z"/><path d="M12 17.7v5.2"/></svg>
<div class="t " style="left:2334.5px;top:1102.3px;font-size:24.3px;letter-spacing:-0.4px;color:#232a3a;font-weight:bold;">Label</div>
<div class="a" style="left:2334.0px;top:1147.8px;width:505.0px;height:67.2px;border:2px solid #d5d9df;border-radius:10px;background:#fff"></div>
<div class="t " style="left:2353.2px;top:1162.2px;font-size:29.5px;letter-spacing:-0.4px;color:#232a3a;">Press me</div>
<div class="a" style="left:2608.0px;top:1248.3px;width:135.5px;height:56.1px;background:#f2f3f5;border-radius:10px"></div>
<div class="a" style="left:2612.3px;top:1251.8px;width:59.4px;height:49.1px;background:#fff;border-radius:9px;box-shadow:0 2px 4px rgba(0,0,0,0.12)"></div>
<svg class="a ic" style="left:2627.0px;top:1262.3px;color:#3b7ef0" width="28" height="28" viewBox="0 0 24 24" stroke-width="1.6"><path d="M17 3a2.85 2.83 0 1 1 4 4L7.5 20.5 2 22l1.5-5.5Z"/></svg>
<div class="a" style="left:2698.3px;top:1264.8px;width:23.3px;height:23.0px;border:2.2px solid #9ca3af;border-radius:3px"></div>
<svg class="a ic" style="left:2698.3px;top:1264.8px;color:#9ca3af" width="23.3" height="23" viewBox="0 0 24 24" stroke-width="2.1"><path d="M7.5 17.8c2 0 2.8-1.1 2.8-2.9V9.2c0-2 1-3.2 3.4-3"/><path d="M7.6 11.5h6.4"/></svg>
<div class="a" style="left:2760.5px;top:1248.3px;width:78.5px;height:56.1px;border:2px solid #e3e6ea;border-radius:10px;background:#fff"></div>
<svg class="a ic" style="left:2786.0px;top:1262.3px;color:#232a3a" width="28" height="28" viewBox="0 0 24 24" stroke-width="2"><path d="M8.6 1.2v6.6M15.3 1.2v6.6"/><path d="M5.4 10a2 2 0 0 1 2-2h9.4a2 2 0 0 1 2 2v1.6a6.7 6.1 0 0 1-13.4 0Z"/><path d="M12 17.7v5.2"/></svg>
<div class="t " style="left:2334.5px;top:1259.8px;font-size:24.3px;letter-spacing:-0.4px;color:#232a3a;font-weight:bold;">Color</div>
<svg class="a ic" style="left:2401.5px;top:1267.0px;color:#374151" width="23" height="23" viewBox="0 0 24 24" stroke-width="2"><circle cx="12" cy="12" r="10.5"/><path d="M12 16.5v-5"/><path d="M12 7.5h.01"/></svg>
<div class="a" style="left:2334.0px;top:1313.0px;width:505.0px;height:67.4px;border:2px solid #d5d9df;border-radius:10px;background:#fff"></div>
<div class="t " style="left:2353.2px;top:1327.4px;font-size:29.5px;letter-spacing:-0.1px;color:#232a3a;">blue</div>
<svg class="a ic" style="left:2788.0px;top:1334.0px;color:#4b5563" width="26" height="26" viewBox="0 0 24 24" stroke-width="2.2"><path d="m6 9 6 6 6-6"/></svg>
<div class="a" style="left:2608.0px;top:1413.6px;width:135.5px;height:56.0px;background:#f2f3f5;border-radius:10px"></div>
<div class="a" style="left:2612.3px;top:1417.1px;width:59.4px;height:49.0px;background:#fff;border-radius:9px;box-shadow:0 2px 4px rgba(0,0,0,0.12)"></div>
<svg class="a ic" style="left:2627.0px;top:1427.6px;color:#3b7ef0" width="28" height="28" viewBox="0 0 24 24" stroke-width="1.6"><path d="M17 3a2.85 2.83 0 1 1 4 4L7.5 20.5 2 22l1.5-5.5Z"/></svg>
<div class="a" style="left:2698.3px;top:1430.0px;width:23.3px;height:23.0px;border:2.2px solid #9ca3af;border-radius:3px"></div>
<svg class="a ic" style="left:2698.3px;top:1430.0px;color:#9ca3af" width="23.3" height="23" viewBox="0 0 24 24" stroke-width="2.1"><path d="M7.5 17.8c2 0 2.8-1.1 2.8-2.9V9.2c0-2 1-3.2 3.4-3"/><path d="M7.6 11.5h6.4"/></svg>
<div class="a" style="left:2760.5px;top:1413.6px;width:78.5px;height:56.0px;border:2px solid #e3e6ea;border-radius:10px;background:#fff"></div>
<svg class="a ic" style="left:2786.0px;top:1427.6px;color:#232a3a" width="28" height="28" viewBox="0 0 24 24" stroke-width="2"><path d="M8.6 1.2v6.6M15.3 1.2v6.6"/><path d="M5.4 10a2 2 0 0 1 2-2h9.4a2 2 0 0 1 2 2v1.6a6.7 6.1 0 0 1-13.4 0Z"/><path d="M12 17.7v5.2"/></svg>
<div class="t " style="left:2334.5px;top:1433.3px;font-size:24.3px;letter-spacing:-0.3px;color:#232a3a;font-weight:bold;">Size</div>
<div class="a" style="left:2334.0px;top:1478.8px;width:505.0px;height:66.8px;border:2px solid #d5d9df;border-radius:10px;background:#fff"></div>
<div class="t " style="left:2353.2px;top:1491.3px;font-size:29.5px;letter-spacing:0px;color:#232a3a;">xs</div>
<svg class="a ic" style="left:2788.0px;top:1500.0px;color:#4b5563" width="26" height="26" viewBox="0 0 24 24" stroke-width="2.2"><path d="m6 9 6 6 6-6"/></svg>
<svg class="a" style="left:0;top:0" width="96" height="1576" viewBox="0 0 96 1576">
<g fill="#ffffff">
<path d="M32.9 35.3 L37.3 28.1 L47.3 45.1 L42.5 52.6 Z"/>
<path d="M44 35 L63.8 35 L67.9 42.7 L48 42.7 Z"/>
<path d="M39.9 62.2 L48.7 62.2 L58.3 44.9 L49.5 44.9 Z"/>
</g>
<g fill="#c2d6f7">
<path d="M49.1 25.9 L58 25.9 L52.8 34.8 L44 34.8 Z"/>
<path d="M27.9 44.5 L37.7 44.5 L42.5 52.6 L32.2 52.6 Z"/>
<path d="M58.3 45.3 L62.9 53.9 L58.7 61.5 L53.9 52.5 Z"/>
</g>
<rect x="0" y="92.6" width="96" height="1.8" fill="#5d6270"/>
<rect x="0" y="466" width="96" height="1.8" fill="#5d6270"/>
<rect x="0" y="1473" width="96" height="1.8" fill="#5d6270"/>
<!-- building -->
<g fill="none" stroke="#fff" stroke-width="2.4">
<rect x="37.2" y="145.4" width="21.6" height="27.6" rx="3"/>
<path d="M43.5 173 V167.5 H52.5 V173"/>
</g>
<g fill="#fff">
<circle cx="42.6" cy="151.5" r="1.3"/><circle cx="48" cy="151.5" r="1.3"/><circle cx="53.4" cy="151.5" r="1.3"/>
<circle cx="42.6" cy="157" r="1.3"/><circle cx="48" cy="157" r="1.3"/><circle cx="53.4" cy="157" r="1.3"/>
<circle cx="42.6" cy="162.5" r="1.3"/><circle cx="48" cy="162.5" r="1.3"/><circle cx="53.4" cy="162.5" r="1.3"/>
<!-- person -->
<circle cx="48" cy="232.5" r="8"/>
<path d="M34 256 C34 247 40 242.5 48 242.5 C56 242.5 62 247 62 256 Z"/>
<!-- star -->
<path d="M48 306 L52.3 315.2 L62.5 316.3 L54.9 323.1 L57 333.2 L48 328.1 L39 333.2 L41.1 323.1 L33.5 316.3 L43.7 315.2 Z" stroke="#fff" stroke-width="1.5" stroke-linejoin="round"/>
<!-- home -->
<path d="M48 518 L64 533 L60 533 L60 547 L52 547 L52 538 L44 538 L44 547 L36 547 L36 533 L32 533 Z" stroke="#fff" stroke-width="1.5" stroke-linejoin="round"/>
<!-- play -->
<path d="M37.5 593 C37.5 591.5 39 590.5 40.5 591.3 L59 603 C60.3 604 60.3 606 59 607 L40.5 619 C39 619.8 37.5 618.8 37.5 617.3 Z"/>
<!-- cubes -->

<!-- calendar -->
<rect x="33.5" y="884" width="29" height="28" rx="4"/>
<rect x="39" y="879.5" width="3.4" height="8" rx="1.5"/><rect x="53.6" y="879.5" width="3.4" height="8" rx="1.5"/>
<!-- folder open -->
<path d="M32 953 C32 952 33 951.5 34 951.5 L43 951.5 L46 955 L58 955 C59 955 60 956 60 957 L60 962 L38 962 L32 975 Z"/>
<path d="M38 964 L64 964 L57 977.5 L32 977.5 Z"/>
<!-- users cog -->
<circle cx="40" cy="1024" r="4.5"/><circle cx="56" cy="1024" r="4.5"/>
<path d="M32 1040 C32 1033 35 1030.5 40 1030.5 C45 1030.5 48 1033 48 1040 Z"/>
<circle cx="48" cy="1031" r="5"/>
<path d="M38 1046.5 C38 1040 42 1037.5 48 1037.5 C52 1037.5 54 1039 55 1041 L55 1046.5 Z"/>
<!-- eye -->
<path d="M32 1102.3 C35 1095 41 1090 48 1090 C55 1090 61 1095 64 1102.3 C61 1109.6 55 1114.6 48 1114.6 C41 1114.6 35 1109.6 32 1102.3 Z"/>
<!-- cog -->
<path d="M45.5 1154 L50.5 1154 L51.5 1158.5 L55 1160 L59 1157.5 L62.5 1161 L60 1165 L61.5 1168.5 L63.5 1169 L63.5 1172.5 L61.5 1173.5 L60 1177 L62.5 1181 L59 1184.5 L55 1182 L51.5 1183.5 L50.5 1187 L45.5 1187 L44.5 1183.5 L41 1182 L37 1184.5 L33.5 1181 L36 1177 L34.5 1173.5 L32.5 1172.5 L32.5 1169 L34.5 1168.5 L36 1165 L33.5 1161 L37 1157.5 L41 1160 L44.5 1158.5 Z"/>
<!-- robot -->
<rect x="36" y="1229" width="24" height="22.5" rx="4"/>
<rect x="32" y="1235" width="3" height="10" rx="1.5"/><rect x="61" y="1235" width="3" height="10" rx="1.5"/>
<rect x="46.8" y="1225" width="2.4" height="5"/>
<!-- book -->
<path d="M31.5 1375 C31.5 1373 33 1371.5 35 1371.5 L45 1371.5 C46.5 1371.5 47 1372.5 47 1374 L47 1392.3 L31.5 1392.3 Z"/>
<path d="M49 1374 C49 1372.5 49.5 1371.5 51 1371.5 L61 1371.5 C63 1371.5 64.5 1373 64.5 1375 L64.5 1392.3 L49 1392.3 Z"/>
</g>
<g fill="none" stroke="#fff" stroke-width="2.4" stroke-linecap="round" stroke-linejoin="round">
<!-- users -->
<circle cx="42" cy="395" r="5.5"/>
<path d="M33.5 415 V413 C33.5 408 37 405 42 405 C47 405 50.5 408 50.5 413 V415"/>
<path d="M52 389.5 C55 390.5 56.5 393 56.5 395 C56.5 397.5 55 399.5 52 400.5"/>
<path d="M56 405.5 C59.5 406.5 62 409.5 62 413 V415"/>
<!-- dollar -->
<path d="M54.5 668.5 C53 666.8 51 666 48 666 C43.5 666 40.8 668.2 40.8 671.3 C40.8 678.5 55.8 675 55.8 682.8 C55.8 686.3 52.5 688.8 48 688.8 C44.2 688.8 41.7 687.5 40.2 685.3" stroke-width="3.2"/>
<path d="M48 662.5 V666 M48 688.8 V693" stroke-width="3.2"/>
<!-- moon -->
<path d="M48.5 1420 C44 1420 35.5 1423 35.5 1432.5 C35.5 1440 41.5 1445 48.5 1445 C54.5 1445 59 1441.5 60.5 1436.5 C58.5 1438 56.5 1438.5 54.5 1438.5 C49.5 1438.5 45 1434.5 45 1428.5 C45 1424.5 46.5 1421.5 48.5 1420 Z"/>
<!-- arrow -->
<path d="M35.5 1525.2 H60.5 M50.5 1514.5 L61 1525.2 L50.5 1536" stroke-width="3.2"/>
</g>
<g fill="#1f222d">
<circle cx="48" cy="1102.3" r="6.5"/>
<circle cx="48" cy="1170.5" r="5"/>
<rect x="40" y="1234.5" width="4" height="4" rx="1"/><rect x="52" y="1234.5" width="4" height="4" rx="1"/>
<rect x="41" y="1243" width="14" height="2"/>



</g>
<circle cx="48" cy="1102.3" r="4.3" fill="#fff"/>
<circle cx="46.5" cy="1101" r="2" fill="#1f222d"/>
<g fill="#1f222d"><circle cx="56" cy="1040" r="6.5"/></g>
<g fill="#fff"><circle cx="56" cy="1040" r="4.8"/></g>
<g fill="#1f222d"><circle cx="56" cy="1040" r="2"/></g>
<g>
<path d="M39.5 739.5 Q39.5 736.2 43 736.2 L53 736.2 Q56.7 736.2 56.7 739.5 L56.7 749.5 L39.5 749.5 Z" fill="#fff"/>
<path d="M31.8 751 Q31.8 747.7 35 747.7 L47.8 747.7 L47.8 761 Q47.8 764.7 44.5 764.7 L35 764.7 Q31.8 764.7 31.8 761 Z" fill="#fff"/>
<path d="M48 747.7 L61 747.7 Q64.1 747.7 64.1 751 L64.1 761 Q64.1 764.7 61 764.7 L51.5 764.7 Q48 764.7 48 761 Z" fill="#fff"/>
<path d="M48 739.3 L51 740.8 L48 742.3 L45 740.8 Z" fill="#1f222d"/>
<path d="M40 750.8 L43 752.3 L40 753.8 L37 752.3 Z" fill="#1f222d"/>
<path d="M55.8 750.8 L58.8 752.3 L55.8 753.8 L52.8 752.3 Z" fill="#1f222d"/>
<path d="M50 744.5 L54 742.8 L54 748 L50 749.5 Z" fill="#1f222d"/>
<path d="M42.3 755.8 L46 754.2 L46 759.5 L42.3 761 Z" fill="#1f222d"/>
<path d="M58 755.8 L61.8 754.2 L61.8 759.5 L58 761 Z" fill="#1f222d"/>
<path d="M47.8 747.7 V765" stroke="#1f222d" stroke-width="0.8"/>
</g>
</svg>

<!-- TOPBAR CONTENT -->
<div class="a" style="left:113px;top:4.5px;width:510px;height:59.5px;border:2px solid #d5d9df;border-radius:12px;background:#fff"></div>
<div class="t b" style="left:130px;top:14.7px;font-size:29px;letter-spacing:-0.8px;color:#6b7280">App summary</div>

<div class="a" style="left:918.6px;top:5px;width:156px;height:58.6px;border:2px solid #e3e6ea;border-radius:12px;background:#fff;overflow:hidden">
 <div class="a" style="left:75.5px;top:0;width:81px;height:60px;background:#fafafa;border-left:1.6px solid #e3e6ea"></div>
</div>
<svg class="a ic" style="left:943px;top:19.6px;color:#1f2937" width="28.8" height="28.8" viewBox="0 0 24 24" stroke-width="1.9"><path d="M3 7v6h6"/><path d="M21 17a9 9 0 0 0-9-9 9 9 0 0 0-6 2.3L3 13"/></svg>
<svg class="a ic" style="left:1020.8px;top:19.6px;color:#555a63" width="28.8" height="28.8" viewBox="0 0 24 24" stroke-width="1.9"><path d="M21 7v6h-6"/><path d="M3 17a9 9 0 0 1 9-9 9 9 0 0 1 6 2.3l3 2.7"/></svg>

<div class="a" style="left:1108px;top:4px;width:135px;height:59.6px;border-radius:12px;background:#f2f3f5"></div>
<div class="a" style="left:1180px;top:8px;width:59px;height:52px;border-radius:10px;background:#fff;box-shadow:0 2px 4px rgba(0,0,0,0.12)"></div>
<svg class="a ic" style="left:1128px;top:20px;color:#8b919b" width="28" height="28" viewBox="0 0 24 24" stroke-width="1.6"><rect x="4.5" y="0.8" width="15" height="22.5" rx="2.2"/><path d="M12 19h.01"/></svg>
<svg class="a ic" style="left:1196px;top:20px;color:#3b7ef0" width="28" height="28" viewBox="0 0 24 24" stroke-width="1.8"><rect x="3.5" y="5" width="17" height="11.5" rx="1.5"/><path d="M2 20.5h20"/></svg>

<div class="a" style="left:1276px;top:4px;width:135px;height:59.6px;border-radius:12px;background:#f2f3f5"></div>
<div class="a" style="left:1280px;top:8px;width:60px;height:52px;border-radius:10px;background:#fff;box-shadow:0 2px 4px rgba(0,0,0,0.12)"></div>
<svg class="a ic" style="left:1296px;top:20px;color:#3b7ef0" width="28" height="28" viewBox="0 0 24 24" stroke-width="1.8"><path d="M3 2v20M21 2v20"/><rect x="9.5" y="7.5" width="5" height="9" rx="2.5"/></svg>
<svg class="a ic" style="left:1364px;top:20px;color:#a0a6b0" width="28" height="28" viewBox="0 0 24 24" stroke-width="1.8"><path d="m21 21-6-6m6 6v-4.8m0 4.8h-4.8"/><path d="M3 16.2V21m0 0h4.8M3 21l6-6"/><path d="M21 7.8V3m0 0h-4.8M21 3l-6 6"/><path d="M3 7.8V3m0 0h4.8M3 3l6 6"/></svg>

<svg class="a" style="left:1726px;top:20px" width="12" height="28" viewBox="0 0 12 28"><circle cx="6" cy="4" r="2.6" fill="#2b3140"/><circle cx="6" cy="14" r="2.6" fill="#2b3140"/><circle cx="6" cy="24" r="2.6" fill="#2b3140"/></svg>

<div class="a" style="left:1777px;top:5px;width:260px;height:58.4px;border:2px solid #e3e6ea;border-radius:11px;background:#fff"></div>
<svg class="a ic" style="left:1802px;top:20px;color:#2b3140" width="28" height="27" viewBox="0 0 24 24" stroke-width="1.9"><path d="m8 2 1.88 1.88"/><path d="M14.12 3.88 16 2"/><path d="M9 7.13v-1a3.003 3.003 0 1 1 6 0v1"/><path d="M12 20c-3.3 0-6-2.7-6-6v-3a4 4 0 0 1 4-4h4a4 4 0 0 1 4 4v3c0 3.3-2.7 6-6 6"/><path d="M12 20v-9"/><path d="M6.53 9C4.6 8.8 3 7.1 3 5"/><path d="M6 13H2"/><path d="M3 21c0-2.1 1.7-3.9 3.8-4"/><path d="M20.97 5c0 2.1-1.6 3.8-3.5 4"/><path d="M22 13h-4"/><path d="M17.2 17c2.1.1 3.8 1.9 3.8 4"/></svg>
<div class="t b" style="left:1839.5px;top:13.5px;font-size:25px;letter-spacing:-0.7px;color:#232a3a">Debug runs</div>
<div class="t b" style="left:1982.5px;top:13.5px;font-size:25px;letter-spacing:-1.2px;color:#4b5563">(2)</div>

<div class="a" style="left:2055.4px;top:4px;width:313px;height:60px;border-radius:11px;background:#f1f3f6"></div>
<div class="a" style="left:2058.4px;top:8px;width:137px;height:52px;border-radius:10px;background:#fff;box-shadow:0 2px 5px rgba(0,0,0,0.13)"></div>
<svg class="a ic" style="left:2073px;top:20px;color:#3b7ef0" width="30" height="30" viewBox="0 0 24 24" stroke-width="1.7"><path d="M17 3a2.85 2.83 0 1 1 4 4L7.5 20.5 2 22l1.5-5.5Z"/></svg>
<div class="t b" style="left:2111.5px;top:13.5px;font-size:25px;letter-spacing:-0.9px;color:#232a3a">Editor</div>
<svg class="a ic" style="left:2219px;top:19px;color:#8b919b" width="29" height="30" viewBox="0 0 24 24" stroke-width="1.6"><path d="M2 12s3-7 10-7 10 7 10 7-3 7-10 7-10-7-10-7Z"/><circle cx="12" cy="12" r="3"/></svg>
<div class="t b" style="left:2256.5px;top:13.5px;font-size:25px;letter-spacing:-0.6px;color:#232a3a">Preview</div>

<div class="a" style="left:2385px;top:5px;width:308px;height:58.5px;border-radius:11px;background:#6581a9"></div>
<svg class="a" style="left:2408px;top:24px" width="21" height="21" viewBox="0 0 21 21"><path d="M2.5 0.5 H15 L20 5.5 V18 a2.5 2.5 0 0 1 -2.5 2.5 H2.5 A2.5 2.5 0 0 1 0 18 V3 A2.5 2.5 0 0 1 2.5 0.5 Z" fill="#fff"/><rect x="3.5" y="4" width="11" height="5" rx="0.5" fill="#6581a9"/><circle cx="10" cy="14.5" r="2.6" fill="#6581a9"/></svg>
<div class="t b" style="left:2436px;top:14px;font-size:25.4px;letter-spacing:-0.5px;color:#fff">Save draft</div>
<div class="a mono" style="left:2565px;top:19px;width:68px;height:31px;border-radius:6px;background:#f2f4f7;color:#2b3140;font-size:22px;line-height:31px;text-align:center;box-shadow:0 1px 1px rgba(0,0,0,0.1)">Ctrl</div>
<div class="a mono" style="left:2638px;top:19px;width:31px;height:31px;border-radius:6px;background:#f2f4f7;color:#2b3140;font-size:22px;line-height:31px;text-align:center;box-shadow:0 1px 1px rgba(0,0,0,0.1)">S</div>

<div class="a" style="left:2709.6px;top:5px;width:155.4px;height:58.5px;border-radius:11px;background:#6581a9"></div>
<svg class="a" style="left:2733px;top:24px" width="21" height="21" viewBox="0 0 21 21"><path d="M2.5 0.5 H15 L20 5.5 V18 a2.5 2.5 0 0 1 -2.5 2.5 H2.5 A2.5 2.5 0 0 1 0 18 V3 A2.5 2.5 0 0 1 2.5 0.5 Z" fill="#fff"/><rect x="3.5" y="4" width="11" height="5" rx="0.5" fill="#6581a9"/><circle cx="10" cy="14.5" r="2.6" fill="#6581a9"/></svg>
<div class="t b" style="left:2760.5px;top:14px;font-size:25.4px;letter-spacing:-0.7px;color:#fff">Deploy</div>

</body></html>
